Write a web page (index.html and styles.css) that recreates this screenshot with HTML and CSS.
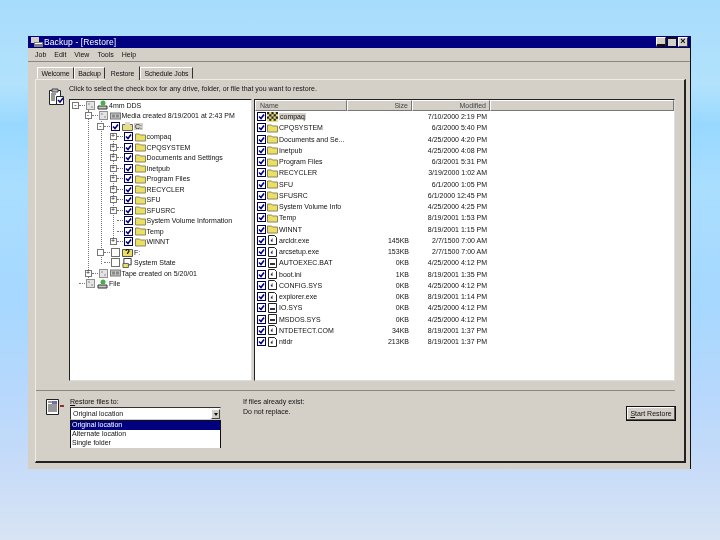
FILE: index.html
```html
<!DOCTYPE html>
<html lang="en">
<head>
    <meta charset="UTF-8">
    <meta name="viewport" content="width=device-width, initial-scale=1.0">
    <title>Backup - [Restore]</title>
    <link rel="stylesheet" href="styles.css">
</head>
<body>
    <svg class="defs" width="0" height="0">
        <symbol id="check" viewBox="0 0 9 9"><rect x=".5" y=".5" width="8" height="8" fill="#fff" stroke="#000050"/><path d="M2 4.500l2 2 3-4" fill="none" stroke="#000080" stroke-width="1.600"/></symbol>
        <symbol id="gray" viewBox="0 0 9 9"><rect x=".5" y=".5" width="8" height="8" fill="#e4e4e4" stroke="#909090"/><path d="M2 2h2v2H2zM5 5h2v2H5z" fill="#b8b8b8"/></symbol>
        <symbol id="empty" viewBox="0 0 9 9"><rect x=".5" y=".5" width="8" height="8" fill="#fff" stroke="#707070"/></symbol>
        <symbol id="folder" viewBox="0 0 11 9"><path d="M.5 8.500V1.500h4l1 1h5v6z" fill="#ece064" stroke="#8a8660"/></symbol>
        <symbol id="file" viewBox="0 0 11 10"><path d="M1.500 .5h6l2 2v7h-8z" fill="#fff" stroke="#222"/><path d="M3.500 6l2-3v4z" fill="#223"/></symbol>
        <symbol id="sysfile" viewBox="0 0 11 10"><path d="M1.500 .5h8v9h-8z" fill="#fff" stroke="#222"/><path d="M3 5h5v2H3z" fill="#334"/></symbol>
        <symbol id="drive" viewBox="0 0 11 10"><path d="M1 6h9v3H1z" fill="#c8c8c8" stroke="#333"/><circle cx="6" cy="3" r="2.500" fill="#48b048"/></symbol>
        <symbol id="tape" viewBox="0 0 11 9"><rect x=".5" y="1.500" width="10" height="6" fill="#c4c4c4" stroke="#777"/><path d="M2 3h3v3H2zM6 3h3v3H6z" fill="#888"/></symbol>
        <symbol id="cdrive" viewBox="0 0 11 10"><path d="M.5 3.500h10v6H.5z" fill="#e8e080" stroke="#666"/><path d="M3 1h5v3H3z" fill="#d8d8d8"/></symbol>
        <symbol id="unknown" viewBox="0 0 11 10"><path d="M.5 2.500h10v7H.5z" fill="#ece064" stroke="#555"/><path d="M4 4c0-2 3-2 3 0 0 1-1.500 1-1.500 3" fill="none" stroke="#111" stroke-width="1.200"/></symbol>
        <symbol id="system" viewBox="0 0 11 11"><path d="M1.500 .5h8v7h-8z" fill="#fff" stroke="#222"/><path d="M.5 6h6v4.500h-6z" fill="#ece064" stroke="#555"/></symbol>
        <symbol id="checker" viewBox="0 0 10 9"><path d="M0 0h10v9H0z" fill="#e8e080"/><path d="M0 0h2v2H0zM4 0h2v2H4zM8 0h2v2H8zM2 2h2v2H2zM6 2h2v2H6zM0 4h2v2H0zM4 4h2v2H4zM8 4h2v2H8zM2 6h2v2H2zM6 6h2v2H6z" fill="#222"/></symbol>
    </svg>

    <div class="window">
        <div class="titlebar">
            <svg class="title-icon" width="12" height="10" viewBox="0 0 12 10"><path d="M0 0h8v6H0z" fill="#d4d0c8"/><path d="M3 5h9v5H3z" fill="#808080"/><path d="M4 6h7v1H4z" fill="#fff"/></svg>
            <span class="title-text">Backup - [Restore]</span>
            <div class="title-buttons">
                <span class="win-btn btn-min"></span>
                <span class="win-btn btn-max"></span>
                <span class="win-btn btn-close">×</span>
            </div>
        </div>

        <div class="menubar">
            <span>Job</span><span>Edit</span><span>View</span><span>Tools</span><span>Help</span>
        </div>

        <div class="tabs">
            <div class="tab tab-welcome">Welcome</div>
            <div class="tab tab-backup">Backup</div>
            <div class="tab tab-restore active">Restore</div>
            <div class="tab tab-schedule">Schedule Jobs</div>
        </div>

        <div class="panel">
            <div class="top-area">
                <svg class="clip-icon" width="16" height="18" viewBox="0 0 16 18">
                    <path d="M1.500 2.500h11v14h-11z" fill="#fff" stroke="#222"/>
                    <path d="M4 1h6v3H4z" fill="#bbb" stroke="#444"/>
                    <path d="M3 6h5M3 8h4M3 10h4M3 12h4" stroke="#333"/>
                    <path d="M8.500 8.500h7v8h-7z" fill="#fff" stroke="#223"/>
                    <path d="M10 12l2 2 3-4" fill="none" stroke="#000080" stroke-width="1.500"/>
                </svg>
                <div class="top-main">
                    <p class="hint">Click to select the check box for any drive, folder, or file that you want to restore.</p>
                    <div class="panes">
                        <div class="tree">
                            <span class="guide guide-a"></span>
                            <span class="guide guide-b"></span>
                            <span class="guide guide-c"></span>
                            <div class="node lv0"><i class="exp">-</i><svg class="cb"><use href="#gray"/></svg><svg class="ic"><use href="#drive"/></svg><span>4mm DDS</span></div>
                            <div class="node lv1"><i class="exp">-</i><svg class="cb"><use href="#gray"/></svg><svg class="ic"><use href="#tape"/></svg><span>Media created 8/19/2001 at 2:43 PM</span></div>
                            <div class="node lv2"><i class="exp">-</i><svg class="cb"><use href="#check"/></svg><svg class="ic"><use href="#cdrive"/></svg><span class="sel">C:</span></div>
                            <div class="node lv3"><i class="exp">+</i><svg class="cb"><use href="#check"/></svg><svg class="ic"><use href="#folder"/></svg><span>compaq</span></div>
                            <div class="node lv3"><i class="exp">+</i><svg class="cb"><use href="#check"/></svg><svg class="ic"><use href="#folder"/></svg><span>CPQSYSTEM</span></div>
                            <div class="node lv3"><i class="exp">+</i><svg class="cb"><use href="#check"/></svg><svg class="ic"><use href="#folder"/></svg><span>Documents and Settings</span></div>
                            <div class="node lv3"><i class="exp">+</i><svg class="cb"><use href="#check"/></svg><svg class="ic"><use href="#folder"/></svg><span>Inetpub</span></div>
                            <div class="node lv3"><i class="exp">+</i><svg class="cb"><use href="#check"/></svg><svg class="ic"><use href="#folder"/></svg><span>Program Files</span></div>
                            <div class="node lv3"><i class="exp">+</i><svg class="cb"><use href="#check"/></svg><svg class="ic"><use href="#folder"/></svg><span>RECYCLER</span></div>
                            <div class="node lv3"><i class="exp">+</i><svg class="cb"><use href="#check"/></svg><svg class="ic"><use href="#folder"/></svg><span>SFU</span></div>
                            <div class="node lv3"><i class="exp">+</i><svg class="cb"><use href="#check"/></svg><svg class="ic"><use href="#folder"/></svg><span>SFUSRC</span></div>
                            <div class="node lv3"><i class="exp none"></i><svg class="cb"><use href="#check"/></svg><svg class="ic"><use href="#folder"/></svg><span>System Volume Information</span></div>
                            <div class="node lv3"><i class="exp none"></i><svg class="cb"><use href="#check"/></svg><svg class="ic"><use href="#folder"/></svg><span>Temp</span></div>
                            <div class="node lv3"><i class="exp">+</i><svg class="cb"><use href="#check"/></svg><svg class="ic"><use href="#folder"/></svg><span>WINNT</span></div>
                            <div class="node lv2"><i class="exp">&nbsp;</i><svg class="cb"><use href="#empty"/></svg><svg class="ic"><use href="#unknown"/></svg><span>F:</span></div>
                            <div class="node lv2"><i class="exp none"></i><svg class="cb"><use href="#empty"/></svg><svg class="ic"><use href="#system"/></svg><span>System State</span></div>
                            <div class="node lv1"><i class="exp">+</i><svg class="cb"><use href="#gray"/></svg><svg class="ic"><use href="#tape"/></svg><span>Tape created on 5/20/01</span></div>
                            <div class="node lv0"><i class="exp none"></i><svg class="cb"><use href="#gray"/></svg><svg class="ic"><use href="#drive"/></svg><span>File</span></div>
                        </div>

                        <div class="list">
                            <div class="list-head">
                                <div>Name</div><div class="num">Size</div><div class="num">Modified</div><div></div>
                            </div>
                            <div class="row"><div class="name"><svg class="cb"><use href="#check"/></svg><svg class="ic"><use href="#checker"/></svg><span class="sel">compaq</span></div><div></div><div class="num">7/10/2000 2:19 PM</div></div>
                            <div class="row"><div class="name"><svg class="cb"><use href="#check"/></svg><svg class="ic"><use href="#folder"/></svg><span>CPQSYSTEM</span></div><div></div><div class="num">6/3/2000 5:40 PM</div></div>
                            <div class="row"><div class="name"><svg class="cb"><use href="#check"/></svg><svg class="ic"><use href="#folder"/></svg><span>Documents and Se...</span></div><div></div><div class="num">4/25/2000 4:20 PM</div></div>
                            <div class="row"><div class="name"><svg class="cb"><use href="#check"/></svg><svg class="ic"><use href="#folder"/></svg><span>Inetpub</span></div><div></div><div class="num">4/25/2000 4:08 PM</div></div>
                            <div class="row"><div class="name"><svg class="cb"><use href="#check"/></svg><svg class="ic"><use href="#folder"/></svg><span>Program Files</span></div><div></div><div class="num">6/3/2001 5:31 PM</div></div>
                            <div class="row"><div class="name"><svg class="cb"><use href="#check"/></svg><svg class="ic"><use href="#folder"/></svg><span>RECYCLER</span></div><div></div><div class="num">3/19/2000 1:02 AM</div></div>
                            <div class="row"><div class="name"><svg class="cb"><use href="#check"/></svg><svg class="ic"><use href="#folder"/></svg><span>SFU</span></div><div></div><div class="num">6/1/2000 1:05 PM</div></div>
                            <div class="row"><div class="name"><svg class="cb"><use href="#check"/></svg><svg class="ic"><use href="#folder"/></svg><span>SFUSRC</span></div><div></div><div class="num">6/1/2000 12:45 PM</div></div>
                            <div class="row"><div class="name"><svg class="cb"><use href="#check"/></svg><svg class="ic"><use href="#folder"/></svg><span>System Volume Info</span></div><div></div><div class="num">4/25/2000 4:25 PM</div></div>
                            <div class="row"><div class="name"><svg class="cb"><use href="#check"/></svg><svg class="ic"><use href="#folder"/></svg><span>Temp</span></div><div></div><div class="num">8/19/2001 1:53 PM</div></div>
                            <div class="row"><div class="name"><svg class="cb"><use href="#check"/></svg><svg class="ic"><use href="#folder"/></svg><span>WINNT</span></div><div></div><div class="num">8/19/2001 1:15 PM</div></div>
                            <div class="row"><div class="name"><svg class="cb"><use href="#check"/></svg><svg class="ic"><use href="#file"/></svg><span>arcldr.exe</span></div><div class="num">145KB</div><div class="num">2/7/1500 7:00 AM</div></div>
                            <div class="row"><div class="name"><svg class="cb"><use href="#check"/></svg><svg class="ic"><use href="#file"/></svg><span>arcsetup.exe</span></div><div class="num">153KB</div><div class="num">2/7/1500 7:00 AM</div></div>
                            <div class="row"><div class="name"><svg class="cb"><use href="#check"/></svg><svg class="ic"><use href="#sysfile"/></svg><span>AUTOEXEC.BAT</span></div><div class="num">0KB</div><div class="num">4/25/2000 4:12 PM</div></div>
                            <div class="row"><div class="name"><svg class="cb"><use href="#check"/></svg><svg class="ic"><use href="#file"/></svg><span>boot.ini</span></div><div class="num">1KB</div><div class="num">8/19/2001 1:35 PM</div></div>
                            <div class="row"><div class="name"><svg class="cb"><use href="#check"/></svg><svg class="ic"><use href="#file"/></svg><span>CONFIG.SYS</span></div><div class="num">0KB</div><div class="num">4/25/2000 4:12 PM</div></div>
                            <div class="row"><div class="name"><svg class="cb"><use href="#check"/></svg><svg class="ic"><use href="#file"/></svg><span>explorer.exe</span></div><div class="num">0KB</div><div class="num">8/19/2001 1:14 PM</div></div>
                            <div class="row"><div class="name"><svg class="cb"><use href="#check"/></svg><svg class="ic"><use href="#sysfile"/></svg><span>IO.SYS</span></div><div class="num">0KB</div><div class="num">4/25/2000 4:12 PM</div></div>
                            <div class="row"><div class="name"><svg class="cb"><use href="#check"/></svg><svg class="ic"><use href="#sysfile"/></svg><span>MSDOS.SYS</span></div><div class="num">0KB</div><div class="num">4/25/2000 4:12 PM</div></div>
                            <div class="row"><div class="name"><svg class="cb"><use href="#check"/></svg><svg class="ic"><use href="#file"/></svg><span>NTDETECT.COM</span></div><div class="num">34KB</div><div class="num">8/19/2001 1:37 PM</div></div>
                            <div class="row"><div class="name"><svg class="cb"><use href="#check"/></svg><svg class="ic"><use href="#file"/></svg><span>ntldr</span></div><div class="num">213KB</div><div class="num">8/19/2001 1:37 PM</div></div>
                        </div>
                    </div>
                </div>
            </div>

            <div class="bottom-area">
                <svg class="doc-icon" width="21" height="18" viewBox="0 0 21 18">
                    <path d="M1.500 1.500h12v15h-12z" fill="#fff" stroke="#222"/>
                    <path d="M3 4h9M3 7h9M3 9h9M3 11h9M3 13h9" stroke="#333"/>
                    <path d="M7 3h5v3H7z" fill="#7070b0"/>
                    <path d="M15 7h4v2h-4z" fill="#903030"/>
                </svg>
                <div class="restore-to">
                    <label class="field-label"><u>R</u>estore files to:</label>
                    <div class="combo">
                        <span>Original location</span>
                        <span class="combo-btn"></span>
                    </div>
                    <ul class="combo-list">
                        <li class="selected">Original location</li>
                        <li>Alternate location</li>
                        <li>Single folder</li>
                    </ul>
                </div>
                <div class="exist-note">
                    <div>If files already exist:</div>
                    <div>Do not replace.</div>
                </div>
                <button class="start-btn"><u>S</u>tart Restore</button>
            </div>
        </div>
    </div>
</body>
</html>
```

FILE: styles.css
```css
* {
    box-sizing: border-box;
}
html, body {
    margin: 0;
    height: 100%;
}
body {
    padding: 36px 29px 0 28px;
    font-family: "Liberation Sans", Arial, sans-serif;
    font-size: 7px;
    color: #111;
    background: linear-gradient(180deg, #a8dcfc 0, #b2e2fc 85px, #98d8ff 125px, #aadeff 190px, #a6d8ff 300px, #b8d8fc 400px, #c8dcf8 470px, #d8e4f4 540px);
    overflow: hidden;
}
.defs {
    position: absolute;
}

.window {
    width: 663px;
    height: 433px;
    display: flex;
    flex-direction: column;
    background: #d4d0c8;
    border-right: 1px solid #111;
    filter: blur(.3px);
}

/* title bar */
.titlebar {
    height: 12px;
    flex: none;
    display: flex;
    align-items: center;
    padding: 0 2px 0 3px;
    background: #000080;
    color: #fff;
}
.title-icon {
    margin-right: 1px;
}
.title-text {
    font-size: 8.5px;
    letter-spacing: .1px;
}
.title-buttons {
    margin-left: auto;
    display: flex;
    gap: 1px;
}
.win-btn {
    width: 10px;
    height: 10px;
    background: #d4d0c8;
    border: 1px solid;
    border-color: #fff #333 #333 #fff;
    color: #000;
    font-size: 9px;
    line-height: 7px;
    font-weight: bold;
    text-align: center;
}
.btn-min {
    border-bottom: 3px solid #111;
}
.btn-max {
    border: 1px solid #111;
    border-top-width: 2px;
}

/* menu */
.menubar {
    height: 14px;
    flex: none;
    display: flex;
    align-items: center;
    padding-left: 7px;
    gap: 8px;
    border-bottom: 1px solid #8a8780;
}

/* tabs */
.tabs {
    display: flex;
    height: 14px;
    margin: 4px 0 -1px 9px;
    flex: none;
    position: relative;
}
.tab {
    height: 12px;
    margin-top: 1px;
    display: flex;
    align-items: center;
    justify-content: center;
    background: #d4d0c8;
    border: 1px solid;
    border-color: #fff #333 transparent #fff;
    letter-spacing: -.15px;
}
.tab-welcome {
    width: 37px;
}
.tab-backup {
    width: 31px;
}
.tab-restore {
    width: 35px;
}
.tab-schedule {
    width: 53px;
}
.tab.active {
    height: 14px;
    margin-top: 0;
    border-bottom: 0;
    border-top-color: transparent;
    border-left-color: transparent;
}

/* main panel */
.panel {
    flex: 1;
    display: flex;
    flex-direction: column;
    margin: 0 4px 6px 7px;
    padding: 0 9px 0 0;
    border: 1px solid;
    border-width: 1px 2px 2px 1px;
    border-color: #eeece6 #222 #222 #eeece6;
}
.top-area {
    display: flex;
    height: 311px;
    flex: none;
    border-bottom: 1px solid #8a8780;
    padding-bottom: 9px;
}
.clip-icon {
    flex: none;
    margin: 8px 5px 0 12px;
}
.top-main {
    flex: 1;
    min-width: 0;
    display: flex;
    flex-direction: column;
}
.hint {
    margin: 0;
    height: 19px;
    padding-top: 5px;
    white-space: nowrap;
}
.panes {
    flex: 1;
    display: flex;
    gap: 2px;
    min-height: 0;
}

/* tree */
.tree {
    width: 183px;
    flex: none;
    position: relative;
    background: #fff;
    border: 1px solid;
    border-color: #222 #ddd #ddd #222;
    overflow: hidden;
}
.guide {
    position: absolute;
    border-left: 1px dotted #777;
}
.guide-a {
    left: 18px;
    top: 10px;
    height: 170px;
}
.guide-b {
    left: 31px;
    top: 21px;
    height: 143px;
}
.guide-c {
    left: 43px;
    top: 41px;
    height: 103px;
}
.node {
    height: 10.5px;
    display: flex;
    align-items: center;
    white-space: nowrap;
}
.lv0 {
    padding-left: 2px;
}
.lv1 {
    padding-left: 14.5px;
}
.lv2 {
    padding-left: 27px;
}
.lv3 {
    padding-left: 39.5px;
}
.exp {
    width: 7px;
    height: 7px;
    flex: none;
    margin-right: 7px;
    position: relative;
    border: 1px solid #777;
    background: #fff;
    font-style: normal;
    font-size: 7px;
    line-height: 4px;
    text-align: center;
}
.exp::after {
    content: "";
    position: absolute;
    left: 6px;
    top: 2px;
    width: 6px;
    border-top: 1px dotted #777;
}
.exp.none {
    border-color: transparent;
    background: none;
}
.cb {
    width: 9px;
    height: 9px;
    flex: none;
    margin-right: 2px;
}
.ic {
    width: 11px;
    height: 10px;
    flex: none;
    margin-right: 1px;
}
.sel {
    background: #d4d0c8;
    padding: 0 1px;
}

/* file list */
.list {
    flex: 1;
    min-width: 0;
    background: #fff;
    border: 1px solid;
    border-color: #222 #ddd #ddd #222;
    overflow: hidden;
}
.list-head, .row {
    display: grid;
    grid-template-columns: 92px 65px 78px 1fr;
}
.list-head {
    height: 11px;
    align-items: center;
    background: #d4d0c8;
    color: #444;
}
.list-head > div {
    height: 100%;
    padding: 1px 3px 0 4px;
    border: 1px solid;
    border-color: #fff #777 #777 #fff;
}
.row {
    height: 11.25px;
    align-items: center;
    white-space: nowrap;
}
.name {
    display: flex;
    align-items: center;
    padding-left: 2px;
}
.name .cb {
    margin-right: 1px;
}
.num {
    text-align: right;
    padding-right: 3px;
}

/* bottom part */
.bottom-area {
    flex: 1;
    display: flex;
}
.doc-icon {
    flex: none;
    margin: 7px 4px 0 9px;
}
.restore-to {
    width: 151px;
    flex: none;
    padding-top: 7px;
}
.field-label {
    display: block;
    height: 9px;
}
.combo {
    height: 13px;
    display: flex;
    align-items: center;
    justify-content: space-between;
    padding-left: 2px;
    background: #fff;
    border: 1px solid;
    border-color: #333 #ccc #ccc #333;
}
.combo-btn {
    width: 9px;
    height: 10px;
    position: relative;
    background: #d4d0c8;
    border: 1px solid;
    border-color: #fff #444 #444 #fff;
}
.combo-btn::after {
    content: "";
    position: absolute;
    left: 1.500px;
    top: 3px;
    border: 2px solid transparent;
    border-top: 3px solid #111;
}
.combo-list {
    list-style: none;
    margin: 0;
    padding: 0;
    height: 28px;
    background: #fff;
    border: 1px solid #111;
    border-bottom: 0;
}
.combo-list li {
    height: 9px;
    line-height: 8px;
    padding-left: 1px;
}
.combo-list .selected {
    background: #000080;
    color: #fff;
}
.exist-note {
    margin-left: 22px;
    padding-top: 6px;
    line-height: 10px;
}
.start-btn {
    margin: 15px -1px 0 auto;
    width: 50px;
    height: 15px;
    padding: 0;
    font-family: inherit;
    font-size: 7px;
    color: #111;
    background: #d4d0c8;
    border: 1px solid #111;
    box-shadow: inset -1px -1px 0 #555, inset 1px 1px 0 #fff;
}
```
